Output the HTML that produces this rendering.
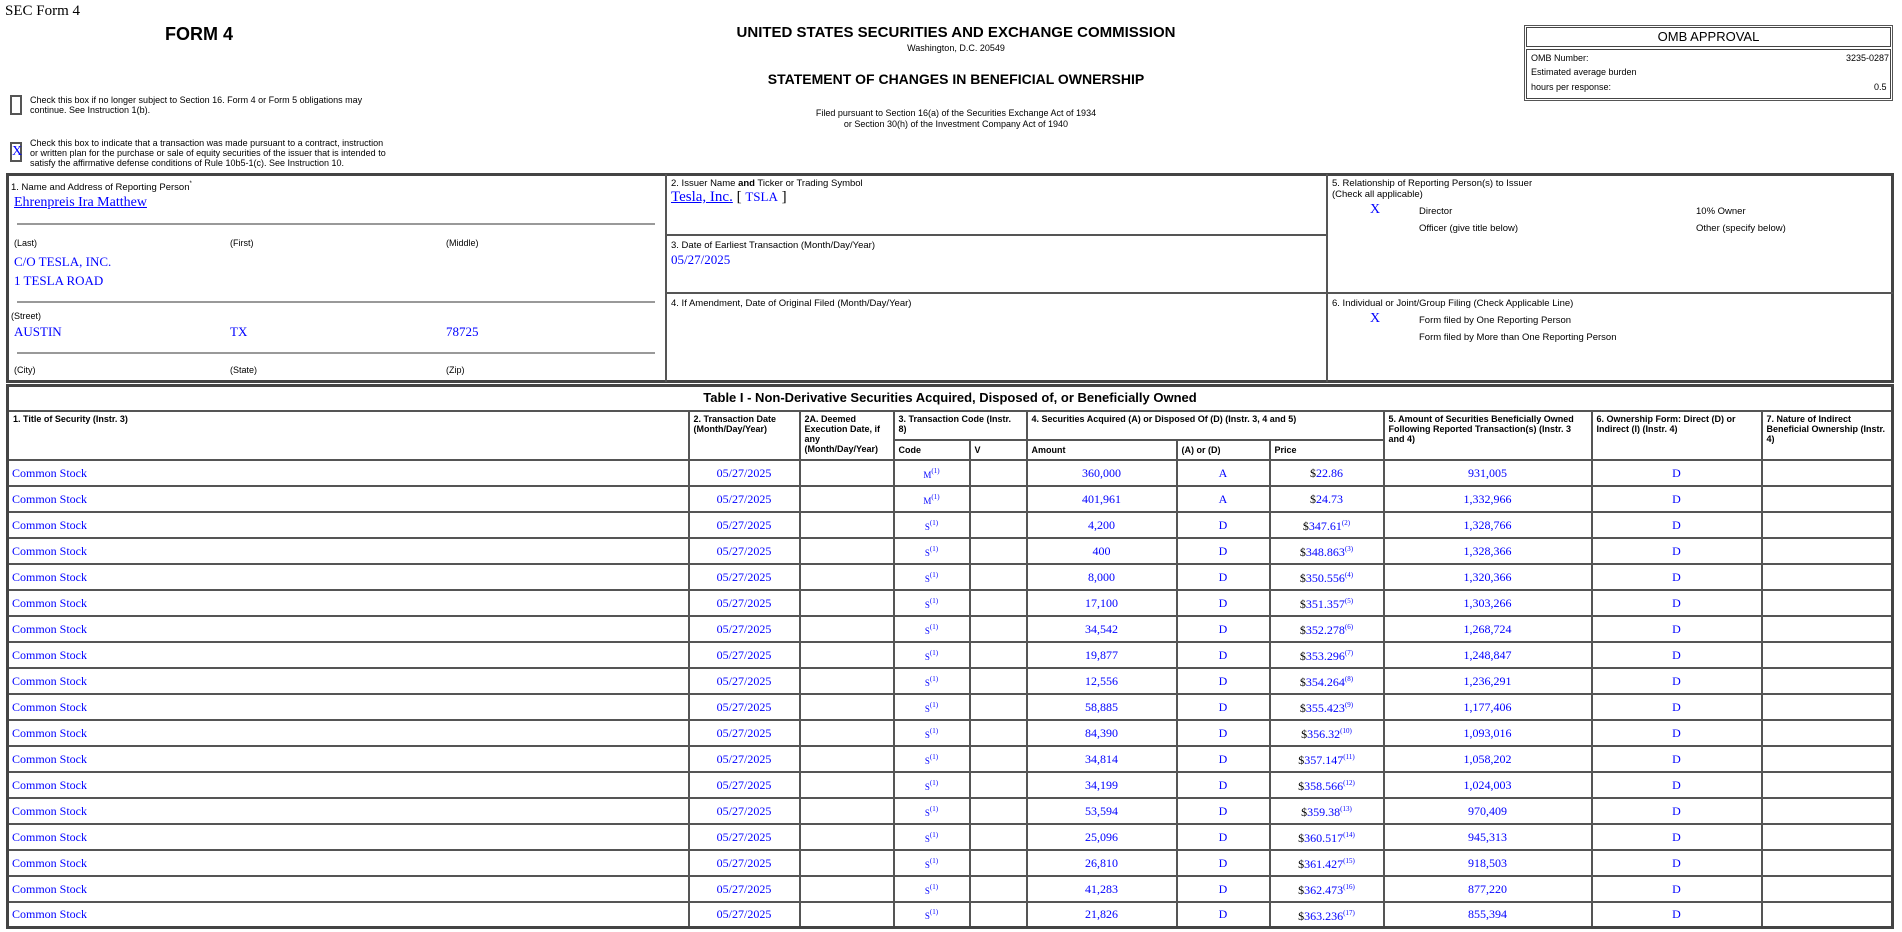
<!DOCTYPE html>
<html><head><meta charset="utf-8">
<style>
*{margin:0;padding:0;box-sizing:border-box}
body{width:1902px;height:932px;background:#fff;position:relative;overflow:hidden;font-family:"Liberation Sans",Arial,sans-serif;color:#000}
.a{position:absolute;white-space:nowrap}
.s{font-size:10px}
.t{font-family:"Liberation Serif","Times New Roman",serif;color:#00f;font-size:13px}
.lnk{text-decoration:underline}
.box{position:absolute;border:1px solid #444}
.gl{position:absolute;height:2px;background:#999}
table{position:absolute;left:6px;top:384px;width:1888px;border-collapse:collapse;table-layout:fixed;border:3px solid #444}
td{border:2px solid #555;font-size:9px;vertical-align:top;padding:2px 4px;font-weight:bold;line-height:10px}
tr.d td{height:26px;vertical-align:middle;font-weight:normal;font-family:"Liberation Serif",serif;color:#00f;font-size:12px;text-align:center;padding:0 3px}
tr.d td.l{text-align:left}
sup{font-size:7px;vertical-align:5px}
.blk{color:#000}
.code{font-size:9px}
</style></head><body>
<div class="a" style="left:5px;top:3px;font-family:'Liberation Serif',serif;font-size:15px">SEC Form 4</div>
<div class="a" style="left:165px;top:24px;font-size:18px;font-weight:bold">FORM 4</div>
<div class="a" style="left:0;width:1912px;text-align:center;top:24px;font-size:15px;font-weight:bold">UNITED STATES SECURITIES AND EXCHANGE COMMISSION</div>
<div class="a" style="left:0;width:1912px;text-align:center;top:43px;font-size:9px">Washington, D.C. 20549</div>
<div class="a" style="left:0;width:1912px;text-align:center;top:71px;font-size:14px;font-weight:bold">STATEMENT OF CHANGES IN BENEFICIAL OWNERSHIP</div>
<div class="a" style="left:0;width:1912px;text-align:center;top:108px;font-size:9px;line-height:11px">Filed pursuant to Section 16(a) of the Securities Exchange Act of 1934<br>or Section 30(h) of the Investment Company Act of 1940</div>

<div class="box" style="left:1524px;top:25px;width:369px;height:76px;border-color:#555"></div>
<div class="box" style="left:1526px;top:27px;width:365px;height:20px;text-align:center;font-size:13px;line-height:18px">OMB APPROVAL</div>
<div class="box" style="left:1526px;top:49px;width:365px;height:50px"></div>
<div class="a" style="left:1531px;top:53px;font-size:9px">OMB Number:</div>
<div class="a" style="left:1846px;top:53px;font-size:9px">3235-0287</div>
<div class="a" style="left:1531px;top:67px;font-size:9px">Estimated average burden</div>
<div class="a" style="left:1531px;top:82px;font-size:9px">hours per response:</div>
<div class="a" style="left:1874px;top:82px;font-size:9px">0.5</div>

<div class="box" style="left:10px;top:95px;width:12px;height:20px;border:2px solid #555"></div>
<div class="a" style="left:30px;top:95px;font-size:9px;line-height:10px">Check this box if no longer subject to Section 16. Form 4 or Form 5 obligations may<br>continue. See Instruction 1(b).</div>
<div class="box" style="left:10px;top:142px;width:12px;height:20px;border:2px solid #555;font-family:'Liberation Serif',serif;color:#00f;font-size:14px;line-height:16px;text-align:center">X</div>
<div class="a" style="left:30px;top:138px;font-size:9px;line-height:10px">Check this box to indicate that a transaction was made pursuant to a contract, instruction<br>or written plan for the purchase or sale of equity securities of the issuer that is intended to<br>satisfy the affirmative defense conditions of Rule 10b5-1(c). See Instruction 10.</div>

<div class="box" style="left:6px;top:173px;width:1888px;height:210px;border:3px solid #444"></div>
<div class="a" style="left:665px;top:174px;width:2px;height:208px;background:#555"></div>
<div class="a" style="left:1326px;top:174px;width:2px;height:208px;background:#555"></div>
<div class="a" style="left:666px;top:234px;width:661px;height:2px;background:#555"></div>
<div class="a" style="left:666px;top:292px;width:1227px;height:2px;background:#555"></div>

<div class="a s" style="left:11px;top:181px;font-size:9.5px">1. Name and Address of Reporting Person<sup style="font-size:6px">*</sup></div>
<div class="a t lnk" style="left:14px;top:195px;font-size:14px">Ehrenpreis Ira Matthew</div>
<div class="gl" style="left:17px;top:223px;width:638px"></div>
<div class="a s" style="left:14px;top:238px;font-size:9px">(Last)</div>
<div class="a s" style="left:230px;top:238px;font-size:9px">(First)</div>
<div class="a s" style="left:446px;top:238px;font-size:9px">(Middle)</div>
<div class="a t" style="left:14px;top:254px">C/O TESLA, INC.</div>
<div class="a t" style="left:14px;top:273px">1 TESLA ROAD</div>
<div class="gl" style="left:17px;top:301px;width:638px"></div>
<div class="a s" style="left:11px;top:311px;font-size:9px">(Street)</div>
<div class="a t" style="left:14px;top:324px">AUSTIN</div>
<div class="a t" style="left:230px;top:324px">TX</div>
<div class="a t" style="left:446px;top:324px">78725</div>
<div class="gl" style="left:17px;top:352px;width:638px"></div>
<div class="a s" style="left:14px;top:365px;font-size:9px">(City)</div>
<div class="a s" style="left:230px;top:365px;font-size:9px">(State)</div>
<div class="a s" style="left:446px;top:365px;font-size:9px">(Zip)</div>

<div class="a" style="left:671px;top:178px;font-size:9.5px">2. Issuer Name <b>and</b> Ticker or Trading Symbol</div>
<div class="a t" style="left:671px;top:189px;font-size:15px"><span class="lnk">Tesla, Inc.</span> <span class="blk">[</span> <span style="font-size:13px">TSLA</span> <span class="blk">]</span></div>
<div class="a" style="left:671px;top:240px;font-size:9.5px">3. Date of Earliest Transaction (Month/Day/Year)</div>
<div class="a t" style="left:671px;top:252px">05/27/2025</div>
<div class="a" style="left:671px;top:298px;font-size:9.5px">4. If Amendment, Date of Original Filed (Month/Day/Year)</div>

<div class="a" style="left:1332px;top:178px;font-size:9.5px;line-height:11px">5. Relationship of Reporting Person(s) to Issuer<br>(Check all applicable)</div>
<div class="a t" style="left:1370px;top:202px;font-size:14px">X</div>
<div class="a" style="left:1419px;top:206px;font-size:9.5px">Director</div>
<div class="a" style="left:1696px;top:206px;font-size:9.5px">10% Owner</div>
<div class="a" style="left:1419px;top:223px;font-size:9.5px">Officer (give title below)</div>
<div class="a" style="left:1696px;top:223px;font-size:9.5px">Other (specify below)</div>
<div class="a" style="left:1332px;top:298px;font-size:9.5px">6. Individual or Joint/Group Filing (Check Applicable Line)</div>
<div class="a t" style="left:1370px;top:311px;font-size:14px">X</div>
<div class="a" style="left:1419px;top:315px;font-size:9.5px">Form filed by One Reporting Person</div>
<div class="a" style="left:1419px;top:332px;font-size:9.5px">Form filed by More than One Reporting Person</div>

<table>
<colgroup><col style="width:681px"><col style="width:111px"><col style="width:94px"><col style="width:76px"><col style="width:57px"><col style="width:150px"><col style="width:93px"><col style="width:114px"><col style="width:208px"><col style="width:170px"><col></colgroup>
<tr><td colspan="11" style="height:25px;text-align:center;font-size:13px;vertical-align:middle">Table I - Non-Derivative Securities Acquired, Disposed of, or Beneficially Owned</td></tr>
<tr><td rowspan="2" style="height:49px">1. Title of Security (Instr. 3)</td><td rowspan="2">2. Transaction Date (Month/Day/Year)</td><td rowspan="2">2A. Deemed Execution Date, if any (Month/Day/Year)</td><td colspan="2" style="height:29px">3. Transaction Code (Instr. 8)</td><td colspan="3">4. Securities Acquired (A) or Disposed Of (D) (Instr. 3, 4 and 5)</td><td rowspan="2">5. Amount of Securities Beneficially Owned Following Reported Transaction(s) (Instr. 3 and 4)</td><td rowspan="2">6. Ownership Form: Direct (D) or Indirect (I) (Instr. 4)</td><td rowspan="2">7. Nature of Indirect Beneficial Ownership (Instr. 4)</td></tr>
<tr><td style="height:20px;vertical-align:middle">Code</td><td style="vertical-align:middle">V</td><td style="vertical-align:middle">Amount</td><td style="vertical-align:middle">(A) or (D)</td><td style="vertical-align:middle">Price</td></tr>
<tr class="d"><td class="l">Common Stock</td><td>05/27/2025</td><td></td><td><span class="code">M</span><sup>(1)</sup></td><td></td><td>360,000</td><td>A</td><td><span class="blk">$</span>22.86</td><td>931,005</td><td>D</td><td></td></tr>
<tr class="d"><td class="l">Common Stock</td><td>05/27/2025</td><td></td><td><span class="code">M</span><sup>(1)</sup></td><td></td><td>401,961</td><td>A</td><td><span class="blk">$</span>24.73</td><td>1,332,966</td><td>D</td><td></td></tr>
<tr class="d"><td class="l">Common Stock</td><td>05/27/2025</td><td></td><td><span class="code">S</span><sup>(1)</sup></td><td></td><td>4,200</td><td>D</td><td><span class="blk">$</span>347.61<sup>(2)</sup></td><td>1,328,766</td><td>D</td><td></td></tr>
<tr class="d"><td class="l">Common Stock</td><td>05/27/2025</td><td></td><td><span class="code">S</span><sup>(1)</sup></td><td></td><td>400</td><td>D</td><td><span class="blk">$</span>348.863<sup>(3)</sup></td><td>1,328,366</td><td>D</td><td></td></tr>
<tr class="d"><td class="l">Common Stock</td><td>05/27/2025</td><td></td><td><span class="code">S</span><sup>(1)</sup></td><td></td><td>8,000</td><td>D</td><td><span class="blk">$</span>350.556<sup>(4)</sup></td><td>1,320,366</td><td>D</td><td></td></tr>
<tr class="d"><td class="l">Common Stock</td><td>05/27/2025</td><td></td><td><span class="code">S</span><sup>(1)</sup></td><td></td><td>17,100</td><td>D</td><td><span class="blk">$</span>351.357<sup>(5)</sup></td><td>1,303,266</td><td>D</td><td></td></tr>
<tr class="d"><td class="l">Common Stock</td><td>05/27/2025</td><td></td><td><span class="code">S</span><sup>(1)</sup></td><td></td><td>34,542</td><td>D</td><td><span class="blk">$</span>352.278<sup>(6)</sup></td><td>1,268,724</td><td>D</td><td></td></tr>
<tr class="d"><td class="l">Common Stock</td><td>05/27/2025</td><td></td><td><span class="code">S</span><sup>(1)</sup></td><td></td><td>19,877</td><td>D</td><td><span class="blk">$</span>353.296<sup>(7)</sup></td><td>1,248,847</td><td>D</td><td></td></tr>
<tr class="d"><td class="l">Common Stock</td><td>05/27/2025</td><td></td><td><span class="code">S</span><sup>(1)</sup></td><td></td><td>12,556</td><td>D</td><td><span class="blk">$</span>354.264<sup>(8)</sup></td><td>1,236,291</td><td>D</td><td></td></tr>
<tr class="d"><td class="l">Common Stock</td><td>05/27/2025</td><td></td><td><span class="code">S</span><sup>(1)</sup></td><td></td><td>58,885</td><td>D</td><td><span class="blk">$</span>355.423<sup>(9)</sup></td><td>1,177,406</td><td>D</td><td></td></tr>
<tr class="d"><td class="l">Common Stock</td><td>05/27/2025</td><td></td><td><span class="code">S</span><sup>(1)</sup></td><td></td><td>84,390</td><td>D</td><td><span class="blk">$</span>356.32<sup>(10)</sup></td><td>1,093,016</td><td>D</td><td></td></tr>
<tr class="d"><td class="l">Common Stock</td><td>05/27/2025</td><td></td><td><span class="code">S</span><sup>(1)</sup></td><td></td><td>34,814</td><td>D</td><td><span class="blk">$</span>357.147<sup>(11)</sup></td><td>1,058,202</td><td>D</td><td></td></tr>
<tr class="d"><td class="l">Common Stock</td><td>05/27/2025</td><td></td><td><span class="code">S</span><sup>(1)</sup></td><td></td><td>34,199</td><td>D</td><td><span class="blk">$</span>358.566<sup>(12)</sup></td><td>1,024,003</td><td>D</td><td></td></tr>
<tr class="d"><td class="l">Common Stock</td><td>05/27/2025</td><td></td><td><span class="code">S</span><sup>(1)</sup></td><td></td><td>53,594</td><td>D</td><td><span class="blk">$</span>359.38<sup>(13)</sup></td><td>970,409</td><td>D</td><td></td></tr>
<tr class="d"><td class="l">Common Stock</td><td>05/27/2025</td><td></td><td><span class="code">S</span><sup>(1)</sup></td><td></td><td>25,096</td><td>D</td><td><span class="blk">$</span>360.517<sup>(14)</sup></td><td>945,313</td><td>D</td><td></td></tr>
<tr class="d"><td class="l">Common Stock</td><td>05/27/2025</td><td></td><td><span class="code">S</span><sup>(1)</sup></td><td></td><td>26,810</td><td>D</td><td><span class="blk">$</span>361.427<sup>(15)</sup></td><td>918,503</td><td>D</td><td></td></tr>
<tr class="d"><td class="l">Common Stock</td><td>05/27/2025</td><td></td><td><span class="code">S</span><sup>(1)</sup></td><td></td><td>41,283</td><td>D</td><td><span class="blk">$</span>362.473<sup>(16)</sup></td><td>877,220</td><td>D</td><td></td></tr>
<tr class="d"><td class="l">Common Stock</td><td>05/27/2025</td><td></td><td><span class="code">S</span><sup>(1)</sup></td><td></td><td>21,826</td><td>D</td><td><span class="blk">$</span>363.236<sup>(17)</sup></td><td>855,394</td><td>D</td><td></td></tr>
</table>
</body></html>
